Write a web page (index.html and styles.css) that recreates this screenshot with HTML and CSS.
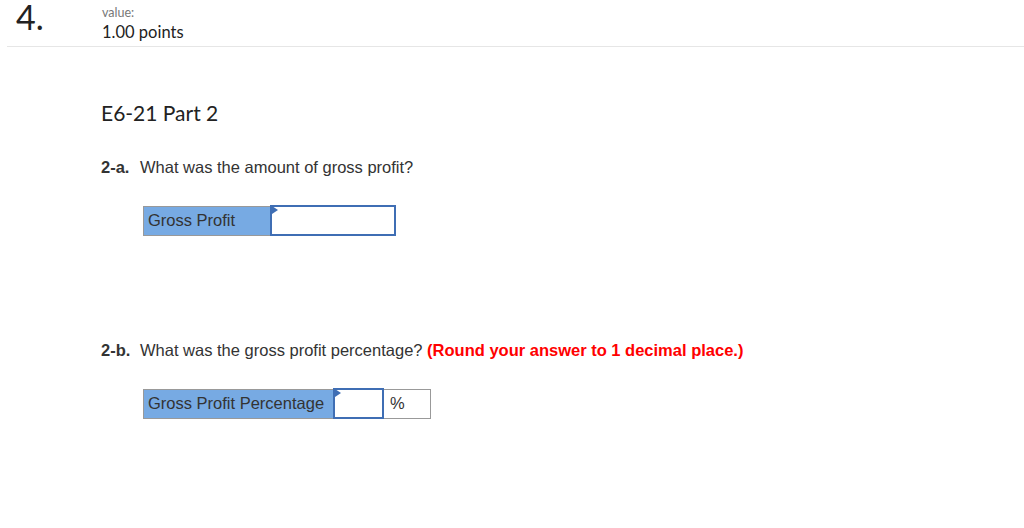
FILE: index.html
```html
<!DOCTYPE html>
<html>
<head>
<meta charset="utf-8">
<link rel="stylesheet" href="styles.css">
</head>
<body>
<div class="header">
  <div class="qnum">4.</div>
  <div class="value">
    <div class="value-label">value:</div>
    <div class="value-points">1.00 points</div>
  </div>
</div>
<div class="content">
  <h2 class="title">E6-21 Part 2</h2>
  <p class="question q-a"><b class="qid">2-a.</b><span>What was the amount of gross profit?</span></p>
  <table class="answer a1">
    <tr>
      <td class="label">Gross Profit</td>
      <td class="input w-a"><span class="flag"></span></td>
    </tr>
  </table>
  <p class="question q-b"><b class="qid">2-b.</b><span>What was the gross profit percentage? <b class="hint">(Round your answer to 1 decimal place.)</b></span></p>
  <table class="answer a2">
    <tr>
      <td class="label l-b">Gross Profit Percentage</td>
      <td class="input w-b"><span class="flag"></span></td>
      <td class="unit">%</td>
    </tr>
  </table>
</div>
</body>
</html>
```
FILE: styles.css
```css
html, body {
  margin: 0;
  padding: 0;
  background: #fff;
}
body {
  width: 1024px;
  height: 528px;
  overflow: hidden;
  font-family: "Liberation Sans", Arial, sans-serif;
  color: #333;
}
.header {
  display: flex;
  align-items: flex-start;
  margin-left: 7px;
  height: 46px;
  border-bottom: 1px solid #e6e6e6;
}
.qnum {
  font-family: Lato, "Open Sans", sans-serif;
  font-weight: 400;
  font-size: 34px;
  line-height: 34px;
  color: #222;
  margin-left: 9px;
  width: 86px;
}
.value {
  padding-top: 6px;
  font-family: Lato, "Open Sans", sans-serif;
}
.value-label {
  font-size: 12.5px;
  line-height: 14px;
  color: #777;
}
.value-points {
  font-size: 16.5px;
  line-height: 20px;
  color: #222;
  margin-top: 2px;
}
.content {
  padding-left: 101px;
}
.title {
  font-family: Lato, "Open Sans", sans-serif;
  font-weight: 400;
  font-size: 21px;
  line-height: 26px;
  color: #222;
  margin: 0;
  padding-top: 53px;
}
.question {
  margin: 0;
  font-size: 16.5px;
  line-height: 20px;
  color: #333;
  display: flex;
}
.q-a {
  margin-top: 31px;
}
.q-b {
  margin-top: 104px;
}
.qid {
  width: 39px;
  flex: none;
}
.hint {
  color: #f00;
}
.answer {
  border-collapse: collapse;
  margin-left: 42px;
}
.a1 {
  margin-top: 28px;
}
.a2 {
  margin-top: 28px;
}
.answer td {
  padding: 0;
  height: 28px;
  font-size: 16.5px;
  color: #333;
  vertical-align: middle;
}
.label {
  background: #77aae3;
  border: 1px solid #999;
  padding-left: 4px !important;
  width: 122px;
  color: #2b2b2b;
}
.l-b {
  width: 185px;
}
.input {
  position: relative;
  background: #fff;
  border: 2px solid #3f6eb4;
  box-shadow: 1px 1px 0 #999;
}
.w-a {
  width: 122px;
  height: 26px !important;
}
.w-b {
  width: 47px;
  height: 26px !important;
}
.flag {
  position: absolute;
  left: 0;
  top: -1px;
  width: 0;
  height: 0;
  border-top: 4px solid transparent;
  border-bottom: 4px solid transparent;
  border-left: 6px solid #3f6eb4;
}
.unit {
  border: 1px solid #999;
  width: 40px;
  padding-left: 6px !important;
  color: #333;
}
```
